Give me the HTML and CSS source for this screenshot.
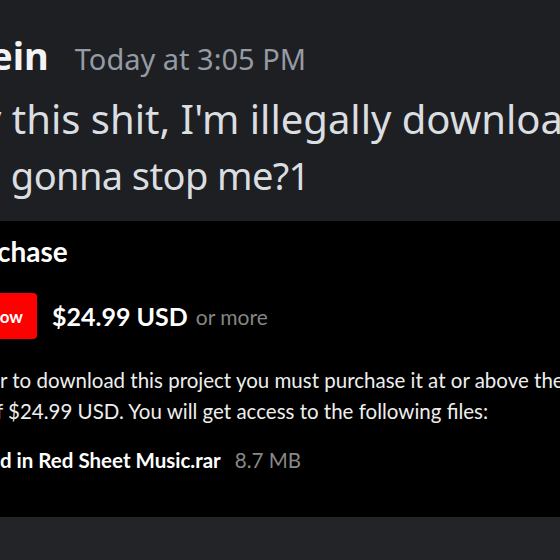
FILE: index.html
```html
<!DOCTYPE html>
<html lang="en">
<head>
  <meta charset="UTF-8" />
  <title>Message</title>
  <link rel="stylesheet" href="styles.css">
</head>
<body>

<div class="message">
  <div class="header">
    <span class="author">ein</span>
    <span class="time">Today at 3:05 PM</span>
  </div>
  <p class="line first">y this shit, I'm illegally downloading it</p>
  <p class="line second">, gonna stop me?1</p>
</div>

<div class="embed">
  <h2 class="title">chase</h2>
  <div class="buy-row">
    <span class="buy-btn">ow</span>
    <span class="price">$24.99 USD</span>
    <span class="more">or more</span>
  </div>
  <p class="desc">
    <span class="desc-line">r to download this project you must purchase it at or above the</span>
    <span class="desc-line cut">f $24.99 USD. You will get access to the following files:</span>
  </p>
  <div class="file">
    <span class="file-name">d in Red Sheet Music.rar</span>
    <span class="file-size">8.7 MB</span>
  </div>
</div>

<div class="below"></div>

</body>
</html>
```

FILE: styles.css
```css
html, body {
  margin: 0;
  height: 100%;
}
body {
  background: #1e1f22;
  overflow: hidden;
  display: flex;
  flex-direction: column;
}
.message {
  font-family: "Noto Sans", sans-serif;
  padding-top: 29px;
  height: 192px;
  white-space: nowrap;
}
.header {
  display: flex;
  align-items: baseline;
  gap: 26px;
  margin-bottom: 10px;
}
.author {
  color: #f2f3f5;
  font-weight: 700;
  font-size: 38px;
  margin-left: -10px;
}
.time {
  color: #949ba4;
  font-size: 29px;
}
.line {
  margin: 0;
  color: #dbdee1;
  font-size: 40px;
  line-height: 56px;
}
.line.first {
  margin-left: -19px;
}
.line.second {
  margin-left: -8px;
  font-size: 38px;
  letter-spacing: -0.6px;
}
.embed {
  background: #000;
  height: 296px;
  font-family: Lato, sans-serif;
  color: #eee;
  white-space: nowrap;
  overflow: hidden;
}
.title {
  margin: 13px 0 0 -3px;
  font-size: 28px;
  font-weight: 700;
  color: #fff;
}
.buy-row {
  display: flex;
  align-items: center;
  margin-top: 25px;
}
.buy-btn {
  background: #ff0000;
  color: #fff;
  font-weight: 700;
  font-size: 17px;
  height: 46px;
  width: 37px;
  box-sizing: border-box;
  display: flex;
  align-items: center;
  justify-content: flex-end;
  padding-right: 14px;
  border-radius: 0 4px 4px 0;
}
.price {
  margin-left: 15px;
  color: #fff;
  font-weight: 700;
  font-size: 25px;
}
.more {
  margin-left: 8px;
  color: #858585;
  font-size: 21px;
}
.desc {
  margin: 26px 0 0;
  font-size: 20.5px;
  line-height: 31px;
}
.desc-line {
  display: block;
}
.desc-line.cut {
  margin-left: -4px;
}
.file {
  margin-top: 21px;
  font-size: 20.5px;
  display: flex;
  align-items: baseline;
  gap: 14px;
}
.file-name {
  font-weight: 700;
  color: #fff;
}
.file-size {
  color: #888;
}
.below {
  flex: 1;
  background: #232428;
}
```
